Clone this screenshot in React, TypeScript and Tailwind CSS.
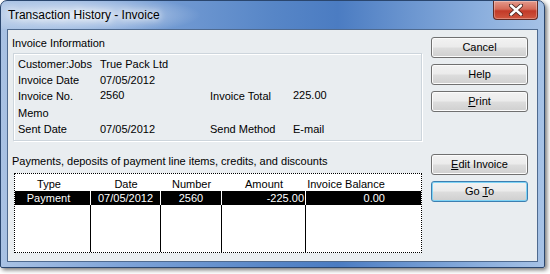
import React from "react";

const btn =
  "h-[21px] w-[97px] rounded-[3px] border text-[11px] text-black flex items-center justify-center bg-[linear-gradient(#f2f2f2_0%,#ebebeb_48%,#dddddd_52%,#cfcfcf_100%)]";

function Button({ children, focused }: { children: React.ReactNode; focused?: boolean }) {
  return (
    <div
      className={
        btn +
        (focused
          ? " border-[#3c7fb1] shadow-[inset_0_0_0_1px_#7fd3f5]"
          : " border-[#707070] shadow-[inset_0_0_0_1px_#fbfbfb]")
      }
    >
      {children}
    </div>
  );
}

function InfoRow({
  label,
  value,
  label2,
  value2,
  lift,
}: {
  label: string;
  value?: string;
  label2?: string;
  value2?: string;
  lift?: boolean;
}) {
  return (
    <div className="flex items-center h-[16.25px]">
      <div className="w-[82px]">{label}</div>
      <div className={"w-[110px]" + (lift ? " pb-[3px]" : "")}>{value}</div>
      <div className="w-[83px]">{label2}</div>
      <div className={lift ? "pb-[3px]" : ""}>{value2}</div>
    </div>
  );
}

const cols = [
  { name: "Type", w: "w-[76px] pr-[8px] text-center", sep: true },
  { name: "Date", w: "w-[70px] text-center", sep: true },
  { name: "Number", w: "w-[61px] text-center", sep: true },
  { name: "Amount", w: "w-[84px] text-center", sep: true },
  { name: "Invoice Balance", w: "w-[80px] text-center", sep: false },
];

const row = ["Payment", "07/05/2012", "2560", "-225.00", "0.00"];
const rowAlign = [
  "w-[76px] pr-[8px] text-center",
  "w-[70px] text-center",
  "w-[61px] text-center",
  "w-[84px] text-right pr-[1px]",
  "w-[80px] text-right pr-[1px]",
];

export default function App() {
  return (
    <div
      className="w-[550px] h-[274px] bg-white overflow-hidden text-black"
      style={{ fontFamily: '"Liberation Sans", Arial, sans-serif' }}
    >
      <div className="w-[545px] h-[268px] rounded-t-[7px] rounded-b-[2px] border border-[#2a466e] shadow-[2px_2px_4px_rgba(0,0,0,0.55)] flex flex-col bg-[linear-gradient(to_right,#a9c2e4_0%,#7fa4d8_22%,#5786c7_50%,#4b7cc2_62%,#8aaedd_88%,#a6c2e6_100%)]">
        {/* title bar */}
        <div className="h-[28px] flex items-start justify-between pl-[7px] pr-[6px] rounded-t-[6px] bg-[radial-gradient(ellipse_120px_20px_at_80px_14px,rgba(255,255,255,0.7),rgba(255,255,255,0))]">
          <div className="mt-[6px] leading-[16px] text-[12px] [text-shadow:0_0_6px_#fff,0_0_10px_#fff]">
            Transaction History - Invoice
          </div>
          <div className="w-[45px] h-[19px] rounded-b-[4px] border border-t-0 border-[#5e2a25] bg-[linear-gradient(#e49a8c_0%,#d46a58_45%,#c23a28_55%,#cf563f_100%)] flex items-center justify-center shadow-[inset_0_0_0_1px_rgba(255,255,255,0.3)]">
            <svg width="14" height="12" viewBox="0 0 14 12">
              <path
                d="M2 1.5 L12 10.5 M12 1.5 L2 10.5"
                stroke="#4a2520"
                strokeWidth="4.2"
                strokeLinecap="round"
              />
              <path
                d="M2 1.5 L12 10.5 M12 1.5 L2 10.5"
                stroke="#ffffff"
                strokeWidth="2.4"
                strokeLinecap="round"
              />
            </svg>
          </div>
        </div>

        {/* client area */}
        <div className="mx-[6px] h-[233px] border border-[#4f6a8f] bg-[#e9edf0] flex text-[11px]">
          <div className="w-[423px] pt-[5px] flex flex-col">
            <div className="ml-[4px] h-[16px] leading-[16px]">Invoice Information</div>
            <div className="ml-[5px] mt-[2px] w-[409px] h-[88px] border border-[#cdd5dc] shadow-[inset_1px_1px_0_#ffffff,1px_1px_0_#ffffff] pt-[2px] pl-[4px]">
              <InfoRow label="Customer:Jobs" value="True Pack Ltd" />
              <InfoRow label="Invoice Date" value="07/05/2012" />
              <InfoRow label="Invoice No." value="2560" label2="Invoice Total" value2="225.00" lift />
              <InfoRow label="Memo" />
              <InfoRow label="Sent Date" value="07/05/2012" label2="Send Method" value2="E-mail" />
            </div>
            <div className="ml-[4px] mt-[12px] h-[16px] leading-[16px]">
              Payments, deposits of payment line items, credits, and discounts
            </div>
            <div className="ml-[6px] mt-[4px] w-[408px] h-[80px] border border-dotted border-black bg-white flex flex-col">
              <div className="h-[17px] pt-[3px] flex leading-[14px]">
                {cols.map((c) => (
                  <div key={c.name} className={c.w}>
                    {c.name}
                  </div>
                ))}
              </div>
              <div className="h-[14px] bg-black text-white flex leading-[14px]">
                {row.map((v, i) => (
                  <div
                    key={i}
                    className={rowAlign[i] + (i < 4 ? " border-r border-white" : "")}
                  >
                    {v}
                  </div>
                ))}
              </div>
              <div className="flex-1 flex">
                {cols.map((c) => (
                  <div
                    key={c.name}
                    className={c.w.split(" ")[0] + (c.sep ? " border-r border-black" : "")}
                  />
                ))}
              </div>
            </div>
          </div>

          <div className="w-[97px] pt-[7px] flex flex-col">
            <Button>Cancel</Button>
            <div className="mt-[6px]">
              <Button>Help</Button>
            </div>
            <div className="mt-[6px]">
              <Button>
                <span>
                  <span className="underline">P</span>rint
                </span>
              </Button>
            </div>
            <div className="mt-[42px]">
              <Button>
                <span>
                  <span className="underline">E</span>dit Invoice
                </span>
              </Button>
            </div>
            <div className="mt-[6px]">
              <Button focused>
                <span>
                  Go <span className="underline">T</span>o
                </span>
              </Button>
            </div>
          </div>
        </div>
      </div>
    </div>
  );
}
